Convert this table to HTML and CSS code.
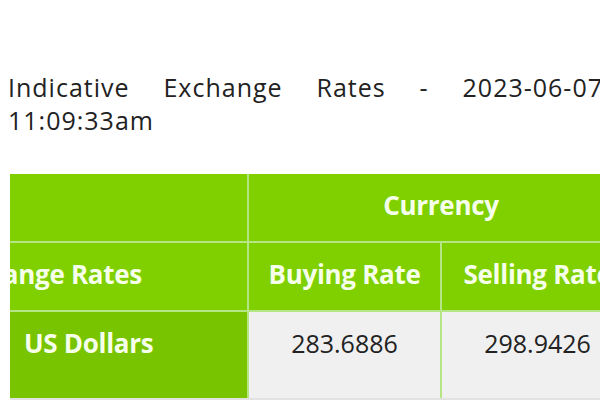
FILE: index.html
```html
<!DOCTYPE html>
<html>
<head>
<meta charset="utf-8">
<link rel="stylesheet" href="styles.css">
</head>
<body>
<div class="page">
  <p class="title"><span class="line">Indicative Exchange Rates - 2023-06-07</span> <span class="line">11:09:33am</span></p>
  <table class="rates">
    <colgroup>
      <col class="c1"><col class="c2"><col class="c3">
    </colgroup>
    <tr class="r1">
      <th></th>
      <th colspan="2">Currency</th>
    </tr>
    <tr class="r2">
      <th class="clip"><span class="shift">Exchange Rates</span></th>
      <th>Buying Rate</th>
      <th>Selling Rate</th>
    </tr>
    <tr class="r3">
      <th class="name">US Dollars</th>
      <td>283.6886</td>
      <td>298.9426</td>
    </tr>
  </table>
</div>
</body>
</html>
```
FILE: styles.css
```css
html, body {
  margin: 0;
  padding: 0;
  background: #fff;
  overflow: hidden;
}
.page {
  width: 640px;
  padding: 71px 0 0 8px;
  font-family: "Open Sans", sans-serif;
}
.title {
  width: 595px;
  margin: 0;
  font-size: 25px;
  line-height: 33px;
  letter-spacing: 1px;
  color: #222;
}
.line {
  display: block;
  text-align: justify;
  text-align-last: justify;
}
.line + .line {
  text-align-last: left;
}
.rates {
  margin: 37px 0 0 2px;
  border-collapse: collapse;
  table-layout: fixed;
  width: 624px;
}
.c1 { width: 238px; }
.c2 { width: 193px; }
.c3 { width: 193px; }
.rates th, .rates td {
  border: 2px solid #b6e585;
  padding: 16px 0 0 0;
  vertical-align: top;
  font-size: 26px;
  line-height: 30px;
  text-align: center;
  white-space: nowrap;
}
.rates tr:first-child th { border-top: none; }
.rates th:first-child { border-left: none; }
.rates th {
  background: #80d000;
  color: #f6ffea;
  font-weight: 700;
  letter-spacing: -0.3px;
}
.r1 th, .r2 th { height: 51px; }
.r3 th, .r3 td { height: 70px; }
.rates td {
  background: #f0f0f0;
  color: #222;
  font-size: 25px;
}
.rates th.name {
  background: #79c400;
  text-align: left;
  padding-left: 14px;
}
.rates th.clip {
  overflow: hidden;
  text-align: left;
}
.shift {
  display: inline-block;
  margin-left: -66px;
}
.r3 td, .r3 th { border-bottom: 2px solid #e2e2e2; }
```
